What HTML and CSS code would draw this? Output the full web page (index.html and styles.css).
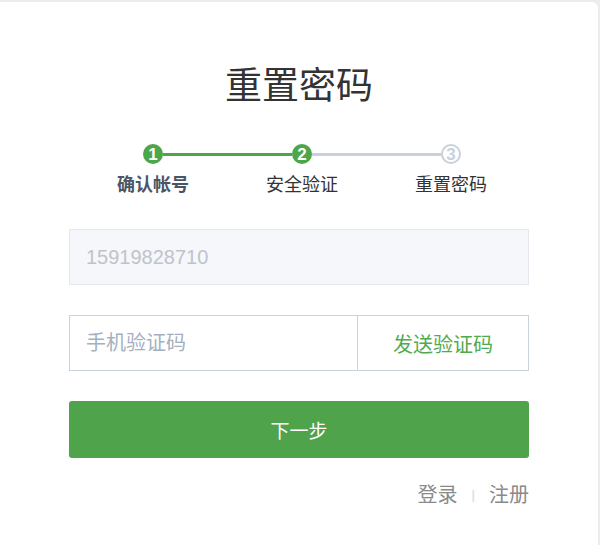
FILE: index.html
```html
<!DOCTYPE html>
<html lang="zh-CN">

<head>
    <meta charset="UTF-8" />
    <meta name="viewport" content="width=device-width, initial-scale=1.0" />
    <title>重置密码</title>
    <link rel="stylesheet" href="styles.css">
</head>

<body>

    <!-- Card -->
    <div class="card">
        <h1 class="title">重置密码</h1>

        <!-- Steps -->
        <div class="steps">
            <div class="steps-bar">
                <span class="dot done">1</span>
                <span class="line done"></span>
                <span class="dot done">2</span>
                <span class="line"></span>
                <span class="dot">3</span>
            </div>
            <div class="steps-labels">
                <span class="label current">确认帐号</span>
                <span class="label">安全验证</span>
                <span class="label">重置密码</span>
            </div>
        </div>

        <!-- Form -->
        <form class="form">
            <input class="field field-disabled" type="text" value="15919828710" readonly>
            <div class="code-row">
                <input class="code-input" type="text" placeholder="手机验证码">
                <button type="button" class="code-btn">发送验证码</button>
            </div>
            <button type="submit" class="submit">下一步</button>
        </form>

        <div class="links">
            <a href="#">登录</a>
            <span class="sep">|</span>
            <a href="#">注册</a>
        </div>
    </div>

</body>

</html>
```

FILE: styles.css
```css
* {
    box-sizing: border-box;
}

body {
    margin: 0;
    padding: 2px 2px 0 0;
    background: #ececec;
    font-family: 'Liberation Sans', 'Noto Sans CJK SC', sans-serif;
    color: #333;
}

.card {
    background: #fff;
    border-radius: 0 6px 0 0;
    height: 543px;
    padding-top: 63px;
}

.title {
    margin: 0;
    font-size: 37px;
    line-height: 44px;
    font-weight: 400;
    text-align: center;
    color: #333;
}

/* Steps */
.steps {
    margin-top: 35px;
    padding-left: 6px;
}

.steps-bar {
    display: flex;
    align-items: center;
    width: 318px;
    margin: 0 auto;
}

.dot {
    width: 20px;
    height: 20px;
    border-radius: 50%;
    border: 2px solid #c8d1db;
    color: #c8d1db;
    font-size: 17px;
    font-weight: 700;
    line-height: 17px;
    text-align: center;
    flex-shrink: 0;
}

.dot.done {
    background: #4ca64a;
    border-color: #4ca64a;
    color: #fff;
}

.line {
    flex: 1;
    height: 3px;
    background: #c8d1db;
}

.line.done {
    background: #4ca64a;
}

.steps-labels {
    display: grid;
    grid-template-columns: repeat(3, 149px);
    justify-content: center;
    margin-top: 9px;
}

.label {
    text-align: center;
    font-size: 18px;
    line-height: 24px;
    color: #333;
}

.label.current {
    font-weight: 700;
    color: #4a5566;
}

/* Form */
.form {
    width: 460px;
    margin: 32px auto 0;
    display: flex;
    flex-direction: column;
    gap: 30px;
}

.field,
.code-input {
    height: 56px;
    padding: 0 16px;
    font-family: inherit;
    font-size: 20px;
    outline: none;
}

.field-disabled {
    width: 100%;
    background: #f5f7fa;
    border: 1px solid #e4e7ed;
    color: #bfc3cb;
}

.code-row {
    display: flex;
    height: 56px;
    border: 1px solid #c9d3df;
}

.code-input {
    flex: 1;
    min-width: 0;
    height: 54px;
    border: none;
    color: #333;
}

.code-input::placeholder {
    color: #a4b0c0;
    font-size: 20px;
}

.code-btn {
    width: 171px;
    border: none;
    border-left: 1px solid #c9d3df;
    background: #fff;
    color: #52aa4e;
    font-family: inherit;
    font-size: 20px;
    cursor: pointer;
}

.submit {
    height: 57px;
    border: none;
    border-radius: 3px;
    background: #4fa34a;
    color: #fff;
    font-family: inherit;
    font-size: 19px;
    cursor: pointer;
}

.submit:hover {
    background: #46963f;
}

/* Links */
.links {
    width: 460px;
    margin: 24px auto 0;
    display: flex;
    justify-content: flex-end;
    align-items: center;
    gap: 14px;
    font-size: 20px;
    line-height: 26px;
}

.links a {
    color: #8a8a8a;
    text-decoration: none;
}

.sep {
    color: #cfd5de;
    font-size: 13px;
}
```
